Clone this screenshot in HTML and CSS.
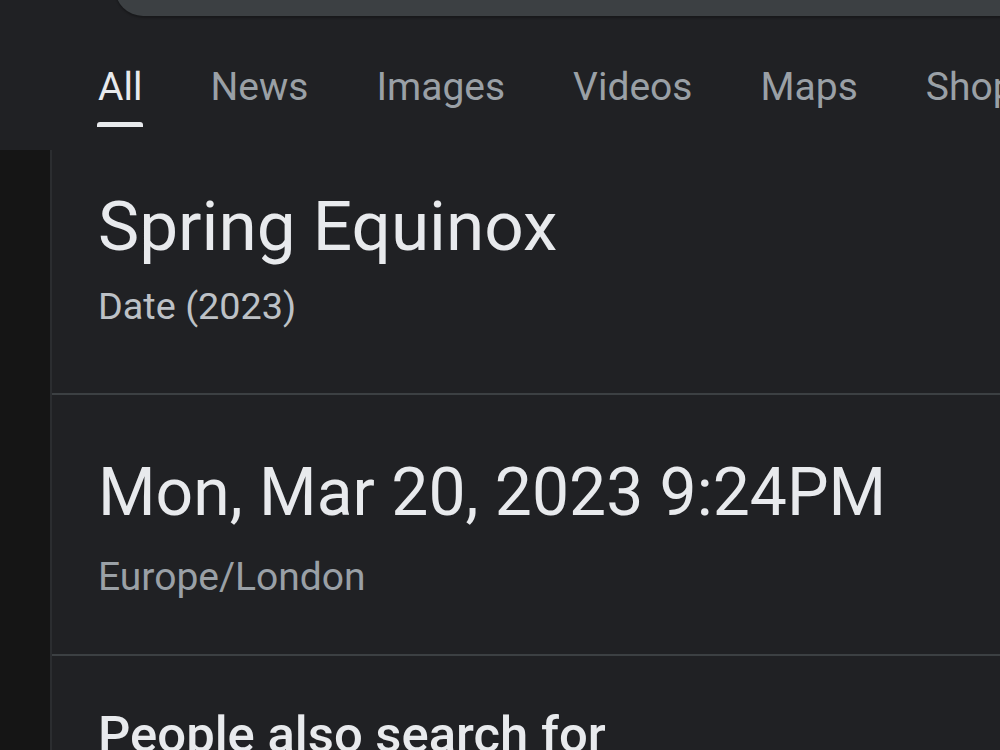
FILE: index.html
```html
<!DOCTYPE html>
<html lang="en">
<head>
<meta charset="utf-8">
<title>Spring Equinox</title>
<link rel="stylesheet" href="styles.css">
</head>
<body>
<header class="header">
  <div class="searchbar"></div>
  <nav class="tabs">
    <span class="tab active">All</span>
    <span class="tab">News</span>
    <span class="tab">Images</span>
    <span class="tab">Videos</span>
    <span class="tab">Maps</span>
    <span class="tab">Shopping</span>
  </nav>
</header>
<div class="main">
  <div class="rail"></div>
  <section class="panel">
    <div class="block block-title">
      <h1 class="title">Spring Equinox</h1>
      <div class="subtitle">Date (2023)</div>
    </div>
    <div class="block block-date">
      <div class="datetime">Mon, Mar 20, 2023 9:24PM</div>
      <div class="zone">Europe/London</div>
    </div>
    <div class="block block-people">
      <h2 class="people">People also search for</h2>
    </div>
  </section>
</div>
</body>
</html>
```
FILE: styles.css
```css
html, body {
  margin: 0;
  padding: 0;
  background: #151515;
  width: 1000px;
  height: 750px;
  overflow: hidden;
  font-family: Roboto, "Noto Sans", sans-serif;
}

.header {
  background: #202124;
  height: 150px;
  overflow: hidden;
  padding-top: 1px;
  box-sizing: border-box;
}

.searchbar {
  margin-top: -41px;
  margin-left: 115px;
  margin-right: -60px;
  height: 56px;
  background: #3c4043;
  border-radius: 34px;
  box-shadow: 0 2px 2px rgba(0, 0, 0, 0.25);
}

.tabs {
  display: flex;
  gap: 68px;
  margin-top: 47px;
  padding-left: 98px;
  white-space: nowrap;
}

.tab {
  display: flex;
  flex-direction: column;
  font-size: 39px;
  line-height: 48px;
  color: #9aa0a6;
}

.tab.active {
  color: #e8eaed;
}

.tab.active::after {
  content: "";
  display: block;
  height: 5px;
  margin: 11px -1px 0;
  background: #e8eaed;
  border-radius: 3px 3px 0 0;
}

.main {
  display: flex;
  height: 600px;
}

.rail {
  width: 50px;
  flex: none;
  background: #151515;
}

.panel {
  flex: 1;
  background: #202124;
  border-left: 2px solid #2b2d30;
}

.block {
  padding-left: 46px;
  border-bottom: 2px solid #3c4043;
}

.block-title {
  padding-top: 37px;
  padding-bottom: 65px;
}

.title {
  margin: 0;
  font-size: 69.3px;
  line-height: 80px;
  font-weight: 400;
  color: #e8eaed;
}

.subtitle {
  margin-top: 17px;
  font-size: 37.8px;
  line-height: 44px;
  color: #bdc1c6;
}

.block-date {
  padding-top: 60px;
  padding-bottom: 55px;
}

.datetime {
  font-size: 66px;
  line-height: 76px;
  color: #e8eaed;
}

.zone {
  margin-top: 24px;
  font-size: 39px;
  line-height: 44px;
  color: #9aa0a6;
}

.block-people {
  border-bottom: none;
  padding-top: 49px;
}

.people {
  margin: 0;
  font-size: 50.8px;
  line-height: 60px;
  font-weight: 500;
  color: #e8eaed;
  white-space: nowrap;
}
```
